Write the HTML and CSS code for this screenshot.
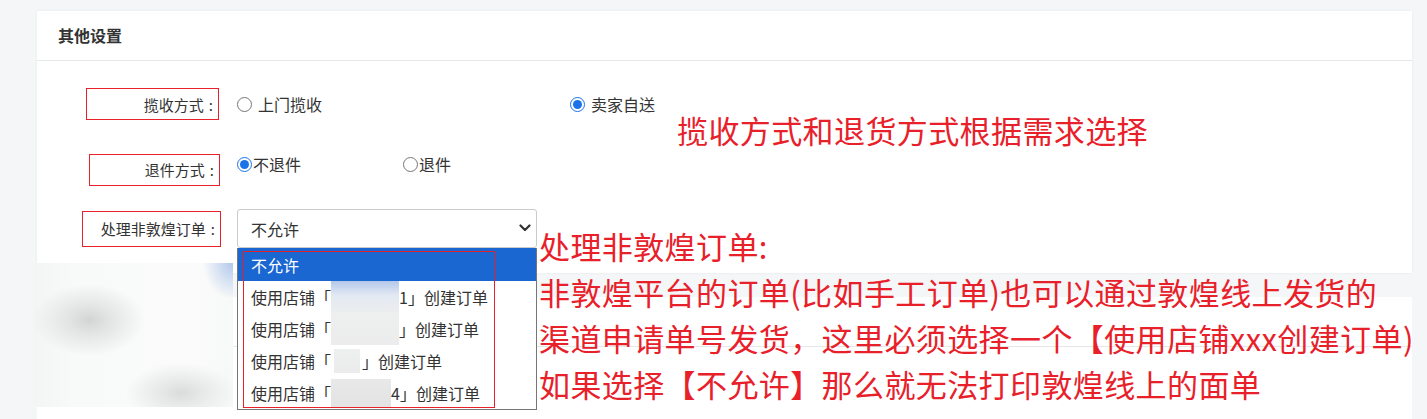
FILE: index.html
```html
<!DOCTYPE html>
<html lang="zh-CN">
<head>
<meta charset="utf-8">
<title>其他设置</title>
<link rel="stylesheet" href="styles.css">
</head>
<body>
<div class="page">
  <section class="card">
    <div class="card-head">其他设置</div>
    <div class="card-body">
      <div class="row row-pickup">
        <div class="label-cell"><div class="label lb-pickup">揽收方式<span class="colon">:</span></div></div>
        <div class="controls">
          <label class="opt opt-wide gap-wide"><input type="radio" name="pickup"><span>上门揽收</span></label>
          <label class="opt gap-wide"><input type="radio" name="pickup" checked><span>卖家自送</span></label>
        </div>
      </div>
      <div class="row row-return">
        <div class="label-cell"><div class="label lb-return">退件方式<span class="colon">:</span></div></div>
        <div class="controls controls-top">
          <label class="opt opt-narrow"><input type="radio" name="ret" checked><span>不退件</span></label>
          <label class="opt"><input type="radio" name="ret"><span>退件</span></label>
        </div>
      </div>
      <div class="row row-order">
        <div class="label-cell"><div class="label lb-order">处理非敦煌订单<span class="colon">:</span></div></div>
        <div class="select-wrap">
          <div class="select">
            <span>不允许</span>
            <svg class="chev" width="12" height="8" viewBox="0 0 12 8"><path d="M1.5 1.5 L6 6 L10.5 1.5" fill="none" stroke="#333" stroke-width="2.2" stroke-linecap="round" stroke-linejoin="round"/></svg>
          </div>
          <ul class="menu">
            <li class="sel">不允许</li>
            <li>使用店铺「<span class="mask m1"></span>1」创建订单</li>
            <li>使用店铺「<span class="mask m2"></span>」创建订单</li>
            <li>使用店铺「<span class="mask m3"></span>」创建订单</li>
            <li>使用店铺「<span class="mask m4"></span>4」创建订单</li>
          </ul>
          <div class="menu-mark"></div>
        </div>
      </div>
    </div>
  </section>
  <section class="card card-second">
    <div class="card-head"></div>
    <div class="card-body tall"></div>
  </section>
</div>
<div class="blur"></div>
<p class="note note-top">揽收方式和退货方式根据需求选择</p>
<div class="note note-bottom">
  <p>处理非敦煌订单:</p>
  <p>非敦煌平台的订单(比如手工订单)也可以通过敦煌线上发货的</p>
  <p>渠道申请单号发货，这里必须选择一个【使用店铺xxx创建订单)</p>
  <p>如果选择【不允许】那么就无法打印敦煌线上的面单</p>
</div>
</body>
</html>
```
FILE: styles.css
```css
* { box-sizing: border-box; }
html, body { margin: 0; padding: 0; }
body {
  background: #f5f6f7;
  font-family: "Noto Sans CJK SC", "Noto Sans", sans-serif;
  color: #333;
  width: 1427px;
  height: 419px;
  overflow: hidden;
  position: relative;
}
.page { padding: 11px 15px 0 37px; }
.card {
  background: #fff;
  box-shadow: 0 0 3px rgba(0,0,0,0.06);
}
.card-head {
  height: 50px;
  line-height: 49px;
  border-bottom: 1px solid #e6e7e8;
  padding-left: 21px;
  font-size: 16px;
  font-weight: bold;
  color: #333;
}
.card-body {
  padding: 27px 0 25px 0;
}
.card-body.tall { height: 72px; padding: 0; }
.card-second { margin-top: 24px; box-shadow: none; }

.row { display: flex; align-items: center; }
.row-pickup { height: 32px; }
.row-return { height: 32px; margin-top: 34px; align-items: flex-start; }
.row-order { height: 39px; margin-top: 23px; }

.label-cell {
  width: 184px;
  display: flex;
  justify-content: flex-end;
  margin-right: 16px;
  align-self: center;
}
.label {
  border: 1px solid #e8202a;
  font-size: 15px;
  color: #333;
  text-align: right;
  padding-right: 5px;
  display: flex;
  align-items: center;
  justify-content: flex-end;
}
.colon { margin-left: 5px; }
.lb-pickup { width: 133px; height: 32px; margin-right: 2px; }
.lb-return { width: 131px; height: 32px; margin-right: 1px; padding-bottom: 2px; }
.lb-order { width: 139px; height: 36px; }

.controls { display: flex; align-items: center; font-size: 16px; line-height: 20px; }
.controls-top { align-self: flex-start; }
.opt { display: flex; align-items: center; color: #333; gap: 1px; }
.opt.gap-wide { gap: 6px; }
.opt-wide { width: 333px; }
.opt-narrow { width: 166px; }
.opt input {
  margin: 0;
  width: 15px;
  height: 15px;
  accent-color: #1a73e8;
}

.select-wrap { position: relative; }
.select {
  width: 300px;
  height: 39px;
  border: 1px solid #cbcbcb;
  border-radius: 3px;
  display: flex;
  align-items: center;
  justify-content: space-between;
  padding: 0 5px 0 13px;
  font-size: 16px;
  color: #333;
}
.chev { display: block; margin-top: -2px; }
.menu {
  position: absolute;
  left: 0;
  top: 39px;
  width: 300px;
  margin: 0;
  padding: 0;
  list-style: none;
  background: #fff;
  border: 1px solid #767676;
  border-top: none;
  font-size: 16px;
  color: #333;
  z-index: 2;
}
.menu li {
  height: 32px;
  line-height: 32px;
  padding-left: 13px;
  white-space: nowrap;
  display: flex;
  align-items: center;
}
.menu li.sel { height: 33px; background: #1a67d2; color: #fff; }
.mask {
  display: inline-block;
  height: 32px;
  background-repeat: no-repeat;
}
.m1 { width: 68px; background-image: linear-gradient(#b4c8ea, #e3e9f3 45%, #eceeee); background-size: 68px 32px; background-position: 0 0; }
.m2 { width: 68px; background-image: linear-gradient(#eeefef, #ececec); background-size: 70px 32px; background-position: 0 0; }
.m3 { width: 31px; background-image: linear-gradient(#eef0f0, #ebebeb); background-size: 26px 24px; background-position: 3px 4px; }
.m4 { width: 60px; background-image: linear-gradient(#e8e8e8, #e4e3e3); background-size: 60px 28px; background-position: 0 2px; }
.menu-mark {
  position: absolute;
  left: 6px;
  top: 42px;
  width: 252px;
  height: 157px;
  border: 1px solid #e8202a;
  z-index: 3;
}

.blur {
  position: absolute;
  left: 33px;
  top: 263px;
  width: 200px;
  height: 144px;
  background-color: #f8f9f9;
  background-image:
    radial-gradient(ellipse 56px 36px at 56px 57px, #d3d4d4 0%, #e2e3e3 35%, rgba(248,249,249,0) 100%),
    radial-gradient(ellipse 56px 30px at 148px 130px, #dadbdb 0%, #e6e7e7 35%, rgba(248,249,249,0) 100%),
    radial-gradient(ellipse 30px 36px at 200px 0px, rgba(160,188,232,0.8), rgba(220,230,245,0) 100%),
    linear-gradient(90deg, #f3f4f4, #f8f9f9 20%, #fbfbfb 80%, #f7f8f8);
  z-index: 1;
}

.note { color: #e8202a; font-size: 31px; letter-spacing: 0.4px; margin: 0; position: absolute; white-space: nowrap; z-index: 4; }
.note-top { left: 677px; top: 110px; line-height: 40px; }
.note-bottom { left: 539px; top: 223px; }
.note-bottom p { margin: 0; line-height: 46px; height: 46px; }
```
